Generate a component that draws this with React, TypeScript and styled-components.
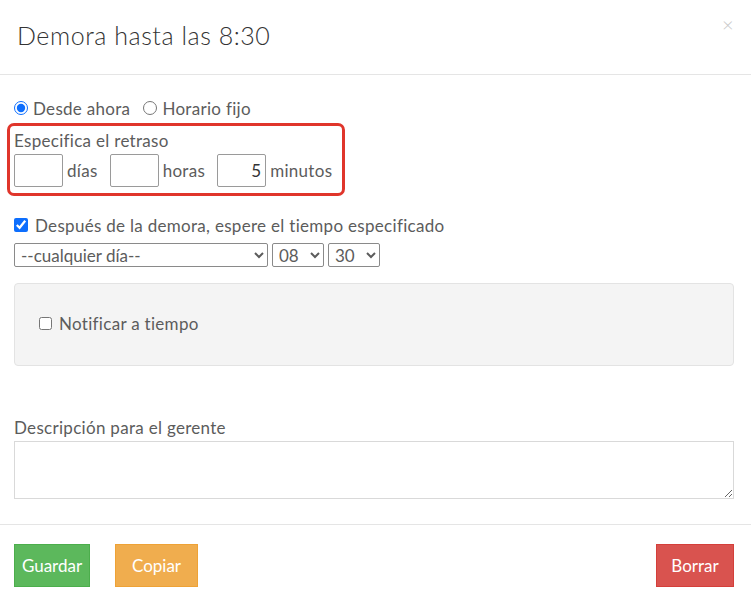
import React from 'react';
import styled, { createGlobalStyle } from 'styled-components';

const GlobalStyle = createGlobalStyle`
    body {
        margin: 0;
        background: #fff;
        font-family: Lato, "Liberation Sans", sans-serif;
        color: #5c5c5c;
        letter-spacing: 0.3px;
    }
`;

const Modal = styled.div`
    width: 751px;
    background: #fff;
`;

const Header = styled.div`
    position: relative;
    height: 75px;
    box-sizing: border-box;
    padding: 19px 17px 0;
    border-bottom: 1px solid #e5e5e5;
`;

const Title = styled.h4`
    margin: 0;
    font-size: 25px;
    font-weight: 300;
    letter-spacing: 0.55px;
    color: #333;
    line-height: 32px;
`;

const Close = styled.span`
    position: absolute;
    top: 12px;
    right: 17px;
    font-size: 20px;
    color: #c8c8c8;
    font-weight: 300;
`;

const Body = styled.div`
    padding: 21px 17px 0 14px;
`;

const RadioRow = styled.div`
    display: flex;
    align-items: center;
    gap: 13px;
    font-size: 17px;
    height: 24px;
`;

const Choice = styled.label`
    display: flex;
    align-items: center;
    gap: 5px;

    input {
        margin: 0;
        width: 14px;
        height: 14px;
        accent-color: #0d6efd;
    }
`;

const DelayBox = styled.div`
    margin: 3px 0 0 -7px;
    width: 338px;
    box-sizing: border-box;
    padding: 5px 4px 6px 4px;
    border: 3.5px solid #e0352b;
    border-radius: 7px;
`;

const BoxLabel = styled.div`
    font-size: 17px;
    line-height: 20px;
    margin-bottom: 3px;
`;

const DelayRow = styled.div`
    display: flex;
    align-items: center;
    font-size: 17px;
`;

const NumInput = styled.input`
    width: 49px;
    height: 33px;
    box-sizing: border-box;
    border: 1px solid #9a9a9a;
    border-radius: 2px;
    text-align: right;
    font: inherit;
    font-size: 17px;
    color: #333;
    padding: 0 4px;
`;

const Unit = styled.span<{ gap: number }>`
    margin: 0 ${p => p.gap}px 0 4px;
`;

const CheckRow = styled.label`
    display: flex;
    align-items: center;
    gap: 7px;
    font-size: 17px;
    margin-top: 18px;
    height: 22px;

    input {
        margin: 0;
        width: 14px;
        height: 14px;
        accent-color: #0d6efd;
    }
`;

const SelectRow = styled.div`
    display: flex;
    gap: 4px;
    margin-top: 7px;
`;

const Select = styled.select<{ w: number }>`
    width: ${p => p.w}px;
    height: 24px;
    font: inherit;
    font-size: 17px;
    color: #5c5c5c;
    border: 1px solid #8a8a8a;
    border-radius: 2px;
    background: #fff;
    padding: 0 2px;
`;

const Panel = styled.div`
    margin-top: 16px;
    height: 83px;
    box-sizing: border-box;
    background: #f4f4f4;
    border: 1px solid #e3e3e3;
    border-radius: 4px;
    display: flex;
    align-items: center;
    padding: 0 0 3px 24px;
`;

const PanelCheck = styled.label`
    display: flex;
    align-items: center;
    gap: 7px;
    font-size: 17px;

    input {
        margin: 0;
        width: 13px;
        height: 13px;
    }
`;

const FieldLabel = styled.div`
    margin-top: 51px;
    font-size: 17px;
    line-height: 22px;
`;

const TextArea = styled.textarea`
    display: block;
    margin-top: 2px;
    width: 100%;
    height: 58px;
    box-sizing: border-box;
    border: 1px solid #d9d9d9;
    resize: vertical;
    font: inherit;
`;

const Footer = styled.div`
    margin-top: 25px;
    border-top: 1px solid #e5e5e5;
    padding: 19px 17px 15px 14px;
    display: flex;
    align-items: center;
    gap: 25px;
`;

const toneColors = {
    green: ['#5cb85c', '#4cae4c'],
    orange: ['#f0ad4e', '#eea236'],
    red: ['#d9534f', '#d43f3a'],
};

const Button = styled.button<{ tone: 'green' | 'orange' | 'red'; w: number }>`
    width: ${p => p.w}px;
    height: 43px;
    padding: 0;
    font: inherit;
    font-size: 17px;
    color: #fff;
    cursor: pointer;
    background: ${p => toneColors[p.tone][0]};
    border: 1px solid ${p => toneColors[p.tone][1]};

    &:last-child {
        margin-left: auto;
    }
`;

export default function App() {
    return (
        <Modal>
            <GlobalStyle />
            <Header>
                <Title>Demora hasta las 8:30</Title>
                <Close>×</Close>
            </Header>

            <Body>
                <RadioRow>
                    <Choice><input type="radio" name="mode" defaultChecked /> Desde ahora</Choice>
                    <Choice><input type="radio" name="mode" /> Horario fijo</Choice>
                </RadioRow>

                <DelayBox>
                    <BoxLabel>Especifica el retraso</BoxLabel>
                    <DelayRow>
                        <NumInput />
                        <Unit gap={12}>días</Unit>
                        <NumInput />
                        <Unit gap={12}>horas</Unit>
                        <NumInput defaultValue="5" />
                        <Unit gap={0}>minutos</Unit>
                    </DelayRow>
                </DelayBox>

                <CheckRow>
                    <input type="checkbox" defaultChecked />
                    Después de la demora, espere el tiempo especificado
                </CheckRow>

                <SelectRow>
                    <Select w={254}><option>--cualquier día--</option></Select>
                    <Select w={52}><option>08</option></Select>
                    <Select w={52}><option>30</option></Select>
                </SelectRow>

                <Panel>
                    <PanelCheck><input type="checkbox" /> Notificar a tiempo</PanelCheck>
                </Panel>

                <FieldLabel>Descripción para el gerente</FieldLabel>
                <TextArea />
            </Body>

            <Footer>
                <Button tone="green" w={76}>Guardar</Button>
                <Button tone="orange" w={83}>Copiar</Button>
                <Button tone="red" w={78}>Borrar</Button>
            </Footer>
        </Modal>
    );
}
